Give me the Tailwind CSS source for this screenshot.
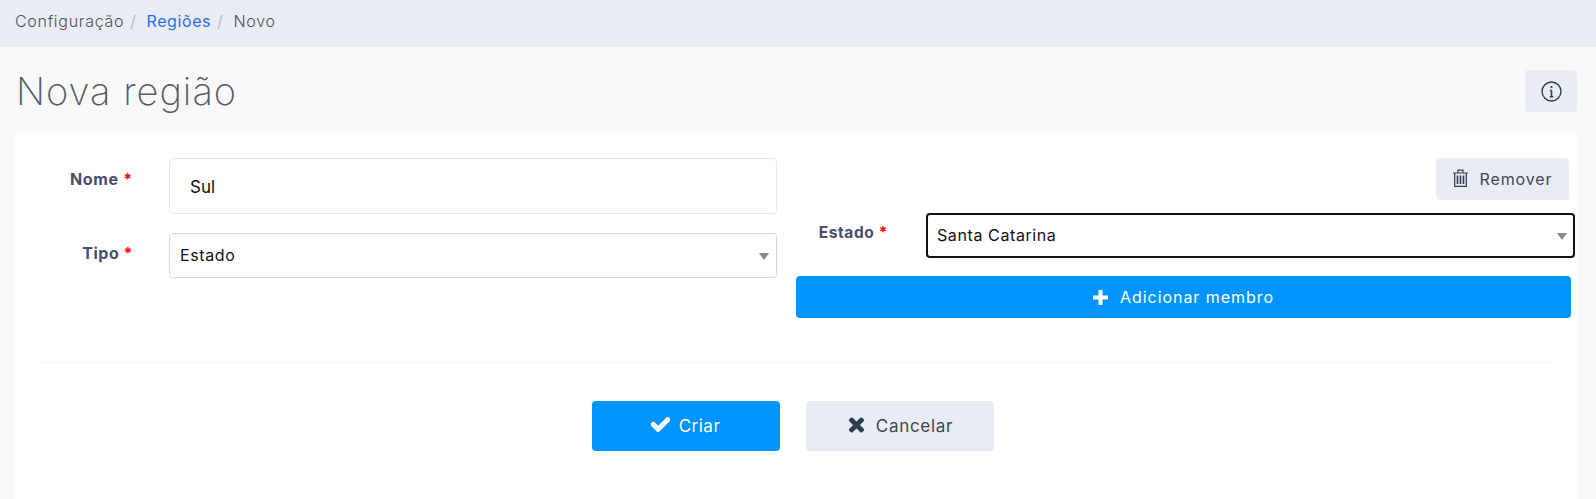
<!DOCTYPE html>
<html lang="pt-BR">
  <head>
    <meta charset="UTF-8" />
    <meta name="viewport" content="width=device-width, initial-scale=1.0" />
    <title>Nova região</title>
    <script src="https://cdn.jsdelivr.net/npm/@tailwindcss/browser@4"></script>
  </head>
  <body class="bg-[#f9f9f9] font-['Inter',sans-serif] text-[16px] text-[#4d5259] h-[499px] overflow-hidden">
    <!-- breadcrumb -->
    <nav class="h-[47px] bg-[#e9ecf3] flex items-center pl-[15px] pb-[5px] text-[16px] font-light tracking-[0.7px]">
      <span>Configuração</span>
      <span class="text-[#a9adb5] ml-[6px] mr-[10px]">/</span>
      <a class="text-[#2a6ff0] font-normal tracking-[0.6px]">Regiões</a>
      <span class="text-[#a9adb5] ml-[6px] mr-[10px]">/</span>
      <span>Novo</span>
    </nav>

    <header class="h-[86px] flex items-center justify-between pl-[16px] pr-[19px] pt-[2px]">
      <h1 class="text-[38px] font-extralight text-[#565b63] tracking-[1px]">Nova região</h1>
      <button class="w-[52px] h-[42px] rounded bg-[#e9ecf3] flex items-center justify-center">
        <svg class="w-[21px] h-[21px]" viewBox="0 0 20 20" fill="none" stroke="#2a3f54" stroke-width="1.3"><circle cx="10" cy="10" r="9"/><path d="M10 9v6M8.3 15h3.4M8.5 9H10" stroke-width="1.5"/><circle cx="10" cy="5.8" r="1.1" fill="#2a3f54" stroke="none"/></svg>
      </button>
    </header>

    <main class="ml-[15px] mr-[19px] bg-white h-[366px] pt-[25px]">
      <div class="flex h-[204px]">
        <!-- left column -->
        <section class="w-[762px] shrink-0 flex flex-col gap-[19px]">
          <div class="flex">
            <label class="w-[118px] shrink-0 text-right font-bold text-[16px] tracking-[0.7px] text-[#4a4e6d] pt-[9px]">Nome <span class="text-[#f00]">*</span></label>
            <input value="Sul" class="ml-[36px] w-[608px] h-[56px] border border-[#e8e9ec] rounded pl-[20px] pt-[2px] text-[17px] text-[#111] bg-white outline-none" />
          </div>
          <div class="flex">
            <label class="w-[118px] shrink-0 text-right font-bold text-[16px] tracking-[0.5px] text-[#4a4e6d] pt-[8px]">Tipo <span class="text-[#f00]">*</span></label>
            <div class="relative ml-[36px] w-[608px] h-[45px]">
              <select class="appearance-none w-full h-full border border-[#d5d7db] rounded pl-[10px] pb-[2px] text-[16px] tracking-[0.6px] text-[#111] bg-white outline-none"><option>Estado</option></select>
              <span class="absolute right-[8px] top-[20px] border-x-[5px] border-x-transparent border-t-[7px] border-t-[#888]"></span>
            </div>
          </div>
        </section>

        <!-- right column -->
        <section class="ml-[19px] w-[779px] shrink-0">
          <div class="flex justify-end pr-[6px]">
            <button class="w-[133px] h-[42px] rounded bg-[#e9ecf3] flex items-center justify-center gap-[10px] text-[#3c4858] tracking-[0.9px]">
              <svg class="w-[17px] h-[18px] -mt-[3px]" viewBox="0 0 16 18" fill="none" stroke="#2a3f54" stroke-width="1.2"><path d="M0.5 4h15M5.5 4V1.2h5V4M2.2 4v13.3h11.6V4"/><path d="M5 6.5v8.5M8 6.5v8.5M11 6.5v8.5" stroke-width="1.6"/></svg>
              <span>Remover</span>
            </button>
          </div>
          <div class="flex mt-[13px]">
            <label class="w-[92px] shrink-0 text-right font-bold text-[15.5px] tracking-[0.6px] text-[#4a4e6d] pt-[8px]">Estado <span class="text-[#f00]">*</span></label>
            <div class="relative ml-[38px] w-[649px] h-[45px]">
              <select class="appearance-none w-full h-full border-2 border-[#111] rounded pl-[9px] pb-[2px] text-[16px] tracking-[0.6px] text-[#111] bg-white outline-none"><option>Santa Catarina</option></select>
              <span class="absolute right-[8px] top-[20px] border-x-[5px] border-x-transparent border-t-[7px] border-t-[#888]"></span>
            </div>
          </div>
          <button class="mt-[18px] w-[775px] h-[42px] rounded bg-[#0094ff] text-white flex items-center justify-center gap-[12px] tracking-[0.95px]">
            <svg class="w-[15px] h-[15px]" viewBox="0 0 15 15" fill="#fff"><path d="M5.5 0h4v5.5H15v4H9.5V15h-4V9.5H0v-4h5.5z"/></svg>
            <span>Adicionar membro</span>
          </button>
        </section>
      </div>

      <hr class="mx-[26px] mr-[25px] border-[#eeeeee]" />

      <div class="flex justify-center gap-[26px] mt-[38px] pr-[7px]">
        <button class="w-[188px] h-[50px] rounded bg-[#0094ff] text-white text-[17px] tracking-[0.5px] flex items-center justify-center gap-[9px]">
          <svg class="w-[19px] h-[19px] -mt-[3px]" viewBox="0 0 512 512" fill="#fff" stroke="#fff" stroke-width="30"><path d="M173.898 439.404l-166.4-166.4c-9.997-9.997-9.997-26.206 0-36.204l36.203-36.204c9.997-9.998 26.207-9.998 36.204 0L192 312.69 432.095 72.596c9.997-9.997 26.207-9.997 36.204 0l36.203 36.204c9.997 9.997 9.997 26.206 0 36.204l-294.4 294.401c-9.998 9.997-26.207 9.997-36.204-.001z"/></svg>
          <span class="pt-[1px]">Criar</span>
        </button>
        <button class="w-[188px] h-[50px] rounded bg-[#e9ecf3] text-[#3c4858] text-[17px] tracking-[0.7px] flex items-center justify-center gap-[12px] pl-[3px]">
          <svg class="w-[15px] h-[20px] -mt-[3px]" viewBox="0 0 352 512" fill="#2a3f54" stroke="#2a3f54" stroke-width="30"><path d="M242.72 256l100.07-100.07c12.28-12.28 12.28-32.19 0-44.48l-22.24-22.24c-12.28-12.28-32.19-12.28-44.48 0L176 189.28 75.93 89.21c-12.28-12.28-32.19-12.28-44.48 0L9.21 111.45c-12.28 12.28-12.28 32.19 0 44.48L109.28 256 9.21 356.07c-12.28 12.28-12.28 32.19 0 44.48l22.24 22.24c12.28 12.28 32.2 12.28 44.48 0L176 322.72l100.07 100.07c12.28 12.28 32.2 12.28 44.48 0l22.24-22.24c12.28-12.28 12.28-32.19 0-44.48L242.72 256z"/></svg>
          <span class="pt-[1px]">Cancelar</span>
        </button>
      </div>
    </main>
  </body>
</html>
